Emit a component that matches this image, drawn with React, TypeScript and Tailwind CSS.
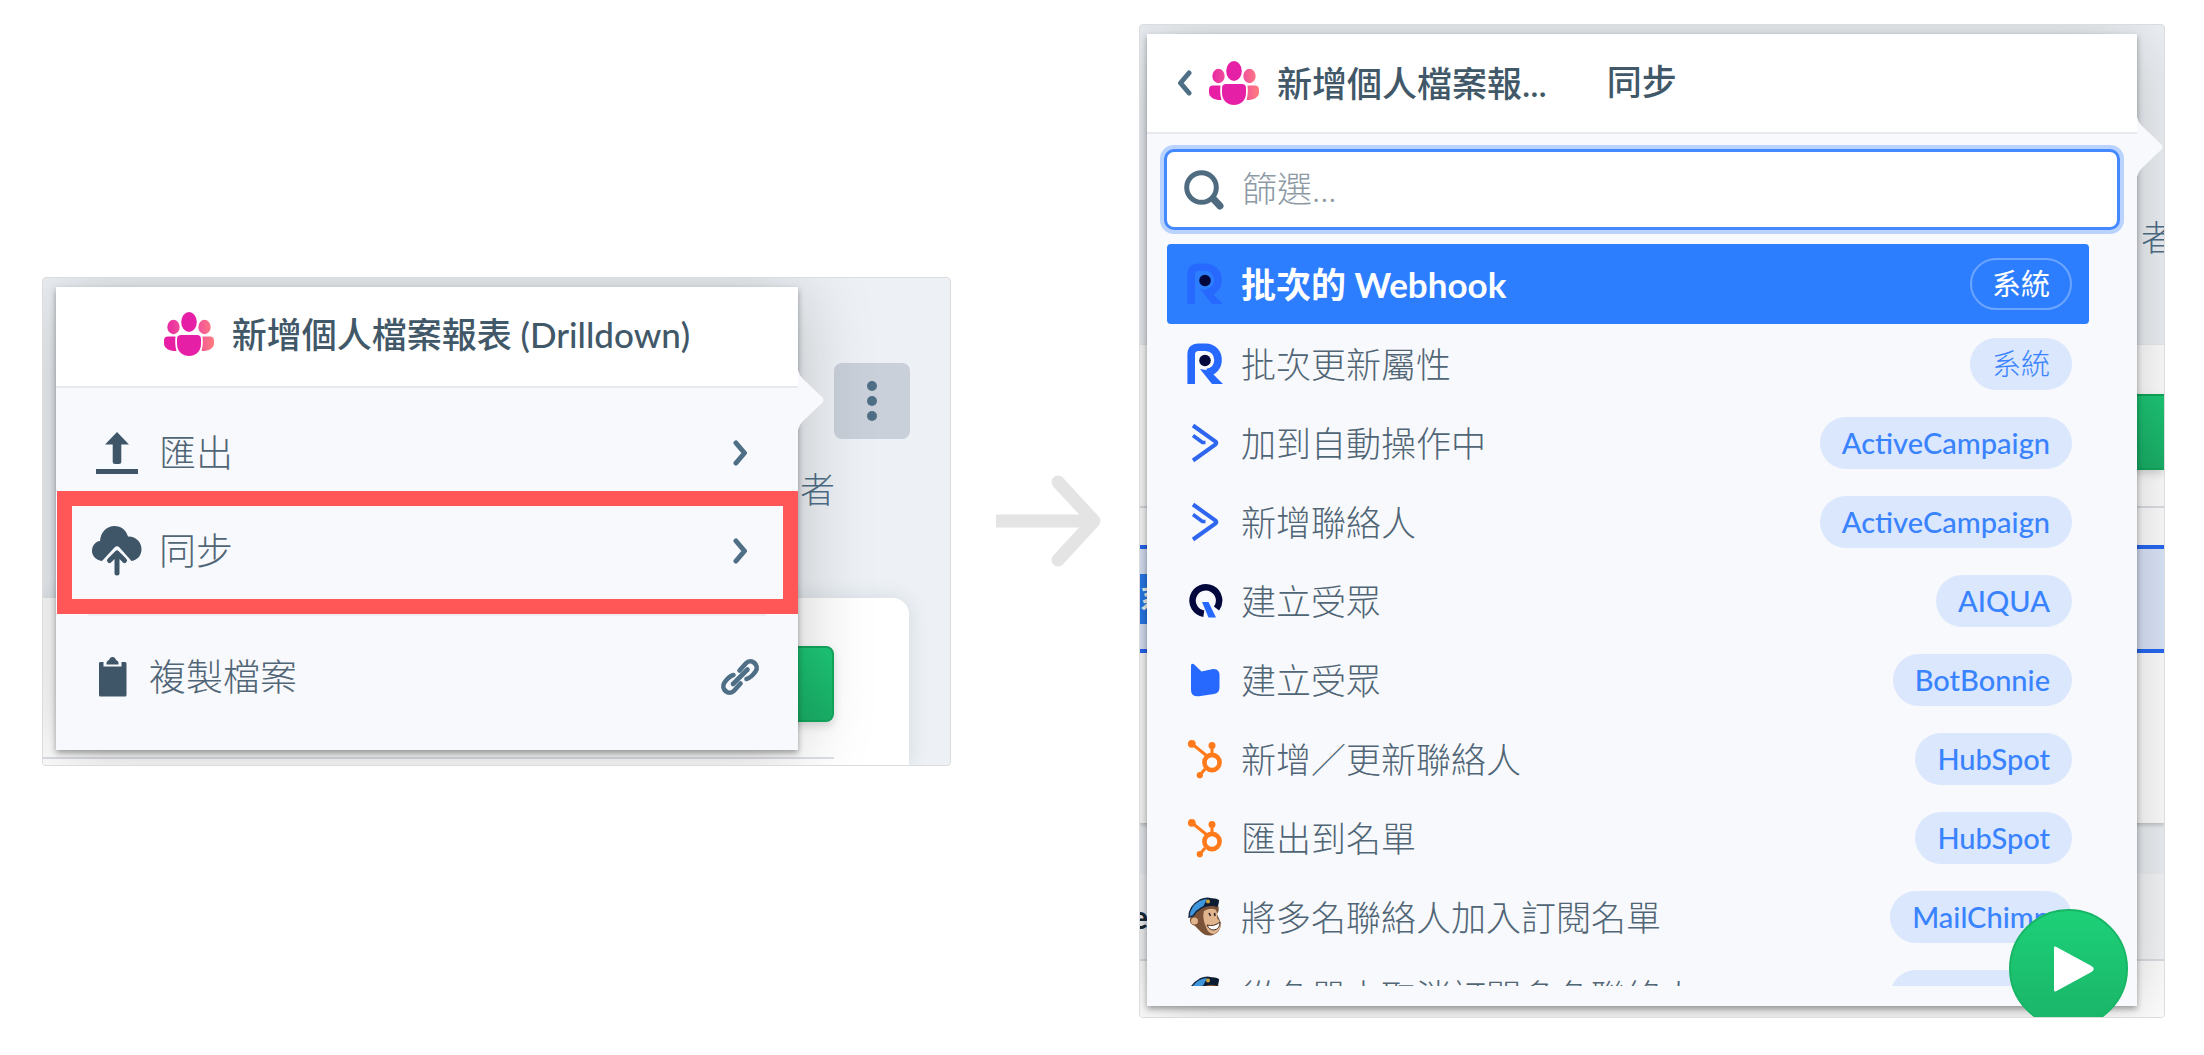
import { ReactNode } from 'react';

type Sync = {
  label: string;
  source: string;
  icon: ReactNode;
};

function PeopleIcon({ id }: { id: string }) {
  return (
    <svg viewBox="0 0 50 44" className="h-[44px] w-[50px] shrink-0" aria-hidden="true">
      <defs>
        <linearGradient id={`${id}-side`} gradientUnits="userSpaceOnUse" x1="0" y1="0" x2="50" y2="0">
          <stop offset="0" stopColor="#e81fa5" />
          <stop offset="0.35" stopColor="#f0509a" />
          <stop offset="0.7" stopColor="#f2559b" />
          <stop offset="1" stopColor="#ff7d7d" />
        </linearGradient>
      </defs>
      <ellipse cx="9.5" cy="15" rx="6.2" ry="7.2" fill={`url(#${id}-side)`} />
      <ellipse cx="40.5" cy="15" rx="6.2" ry="7.2" fill={`url(#${id}-side)`} />
      <ellipse cx="25" cy="10" rx="7.8" ry="10" fill="#e620a6" />
      <path d="M4 24.500H11.500C11 29 11 34 12.500 39C7 39.500 0 37 0 31.500V28.500C0 26 1.500 24.500 4 24.500Z" fill="#e81fa5" />
      <path d="M46 24.500H38.500C39 29 39 34 37.500 39C43 39.500 50 37 50 31.500V28.500C50 26 48.500 24.500 46 24.500Z" fill={`url(#${id}-side)`} />
      <path d="M17 23H33C35.500 23 37 24.500 37 27V32C37 40 31 44 25 44C19 44 13 40 13 32V27C13 24.500 14.500 23 17 23Z" fill="#e620a6" />
    </svg>
  );
}

function Chevron({ left = false }: { left?: boolean }) {
  return (
    <svg viewBox="0 0 15 26" className="h-[26px] w-[15px] shrink-0" fill="none" stroke="#4f6f87" strokeWidth="5" strokeLinecap="round" strokeLinejoin="round" aria-hidden="true">
      <path d={left ? 'M12 3L3.500 13L12 23' : 'M3 3L11.500 13L3 23'} />
    </svg>
  );
}

function UploadIcon() {
  return (
    <svg viewBox="0 0 50 50" className="w-[50px]" fill="#3f5668" aria-hidden="true">
      <path d="M25 4L37 16.500H29.300V33.500Q29.300 36 26.800 36H23.200Q20.700 36 20.700 33.500V16.500H13Z" />
      <rect x="4" y="41" width="42" height="5" />
    </svg>
  );
}

function CloudIcon() {
  return (
    <svg viewBox="0 0 50 50" className="w-[50px]" aria-hidden="true">
      <path d="M10 35C4 34 0 30 0 25C0 19.500 3.500 15.500 8 15C8.500 6.500 14.500 0 22.500 0C29 0 34 4 36 10.500C43.500 10 49.500 16 49.500 23C49.500 29 46 34 39.500 35L27.500 21.500Q25 19 22.500 21.500Z" fill="#3f5668" />
      <path d="M25 47V27M17.500 34.500L25 27L32.500 34.500" fill="none" stroke="#3f5668" strokeWidth="5" strokeLinecap="round" strokeLinejoin="round" />
    </svg>
  );
}

function ClipboardIcon() {
  return (
    <svg viewBox="0 0 40 40" className="w-10" fill="#3f5668" aria-hidden="true">
      <path d="M8 5H11.500V9.500H29.500V5H33Q34.500 5 34.500 6.500V38Q34.500 39.500 33 39.500H8.500Q7 39.500 7 38V6.500Q7 5 8 5Z" />
      <path d="M14.500 7.500Q14 4 17 3Q18 0 20.500 0Q23 0 24 3Q27 4 26.500 7.500Z" />
    </svg>
  );
}

function LinkIcon() {
  return (
    <svg viewBox="0 0 40 40" className="w-10" fill="none" stroke="#4f6f87" strokeWidth="4.600" strokeLinecap="round" aria-hidden="true">
      <path d="M13 27L27.500 12.500" />
      <path d="M19.500 13.500L26 6.200C31 0.800 40 8 35.500 14.500C33 18 30 21 26.500 22" />
      <path d="M20.500 26.500L14 33.800C9 39.200 0 32 4.500 25.500C7 22 10 19 13.500 18" />
    </svg>
  );
}

function SearchIcon() {
  return (
    <svg viewBox="0 0 40 40" className="w-10 shrink-0" fill="none" stroke="#4f6b80" aria-hidden="true">
      <circle cx="17.500" cy="17.500" r="14.800" strokeWidth="5" />
      <path d="M29 28.500L36 36" strokeWidth="7" strokeLinecap="round" />
    </svg>
  );
}

function RIcon() {
  return (
    <svg viewBox="0 0 36 42" className="w-9" aria-hidden="true">
      <path d="M4.200 41V11.500Q4.200 4.200 11.500 4.200H18.500C26 4.200 31 10 31 17C31 23.500 27 28.500 20 29.500" fill="none" stroke="#2769ff" strokeWidth="7.600" />
      <path d="M13 26L22 27.500L26 31L36 41H25Z" fill="#2769ff" />
      <circle cx="18" cy="17.500" r="5.800" fill="#02083c" />
    </svg>
  );
}

function ActiveCampaignIcon() {
  return (
    <svg viewBox="0 0 36 42" className="w-9" fill="none" stroke="#2f66f0" aria-hidden="true">
      <path d="M6 3.500L28.500 19.500Q30 21 28.500 22.500L6 38.500" strokeWidth="4" />
      <path d="M6 13.500L15.500 20.500H18.500" strokeWidth="3.600" strokeLinejoin="round" />
    </svg>
  );
}

function AiquaIcon() {
  return (
    <svg viewBox="0 0 36 42" className="w-9" aria-hidden="true">
      <path d="M16.800 33.700A13.300 13.300 0 1 1 29.500 28.500" fill="none" stroke="#02083c" strokeWidth="6.500" />
      <path d="M15 22H21.500L29 37.500H21.500Z" fill="#2769ff" />
    </svg>
  );
}

function BotBonnieIcon() {
  return (
    <svg viewBox="0 0 36 42" className="w-9" aria-hidden="true">
      <path d="M4 7Q4 3.500 7 5.200L14.500 12.500L26 10Q32.500 9.500 32.500 16.500V28.500Q32.500 34 27 35L12 37.300Q4 38 4 31Z" fill="#2769ff" />
    </svg>
  );
}

function HubSpotIcon() {
  return (
    <svg viewBox="0 0 36 42" className="w-9" fill="none" stroke="#ff7a1a" aria-hidden="true">
      <path d="M4.500 5.500L20 18M25 8V17M18 31L13 37" strokeWidth="3" />
      <circle cx="25" cy="24.500" r="7.600" strokeWidth="4.600" />
      <g fill="#ff7a1a" stroke="none">
        <circle cx="4.800" cy="5.800" r="3.900" />
        <circle cx="25" cy="7.500" r="3.500" />
        <circle cx="12.800" cy="37.200" r="3.100" />
      </g>
    </svg>
  );
}

function MailChimpIcon() {
  return (
    <svg viewBox="0 0 36 42" className="w-9" aria-hidden="true">
      <path d="M5 17L11 10L31 9Q33 14 30 18L34 27Q34 36 26 39Q19 41 14 36L8 30Q2 28 3 23Z" fill="#7a5238" />
      <path d="M17 15Q24 11 29 14Q31 18 30 22L34 27Q34 35 27 38Q21 38 19 31Q15 22 17 15Z" fill="#e0b48c" />
      <circle cx="7.500" cy="25" r="3.500" fill="#e0b48c" />
      <path d="M20 29Q27 31 33 26Q33 33 27 34Q22 34 20 29Z" fill="#fff" stroke="#4a3022" strokeWidth="1" />
      <path d="M22 17L23.500 20M27.500 17L28 20" stroke="#2a2230" strokeWidth="1.600" />
      <path d="M2 21Q2 10 13 4Q20 1 24 3L26 9Q13 9 6 20Z" fill="#3e97dd" stroke="#16263f" strokeWidth="1.400" />
      <path d="M20 3Q28 1 32 4Q32 9 30 11Q24 8 16 11Z" fill="#0e1c33" />
      <circle cx="21" cy="5.500" r="2" fill="#c9a73c" />
    </svg>
  );
}

const syncs: Sync[] = [
  { label: '批次的 Webhook', source: '系統', icon: <RIcon /> },
  { label: '批次更新屬性', source: '系統', icon: <RIcon /> },
  { label: '加到自動操作中', source: 'ActiveCampaign', icon: <ActiveCampaignIcon /> },
  { label: '新增聯絡人', source: 'ActiveCampaign', icon: <ActiveCampaignIcon /> },
  { label: '建立受眾', source: 'AIQUA', icon: <AiquaIcon /> },
  { label: '建立受眾', source: 'BotBonnie', icon: <BotBonnieIcon /> },
  { label: '新增／更新聯絡人', source: 'HubSpot', icon: <HubSpotIcon /> },
  { label: '匯出到名單', source: 'HubSpot', icon: <HubSpotIcon /> },
  { label: '將多名聯絡人加入訂閱名單', source: 'MailChimp', icon: <MailChimpIcon /> },
  { label: '從名單中取消訂閱多名聯絡人', source: 'MailChimp', icon: <MailChimpIcon /> },
];

function PopoverTail() {
  return (
    <svg viewBox="0 0 27 60" className="absolute top-[83px] left-full h-[60px] w-[27px]" aria-hidden="true">
      <path d="M0 0Q1 5 5 9L24 27Q27 30 24 33L5 51Q1 55 0 60Z" fill="#f8f9fc" />
    </svg>
  );
}

function MenuRow({ icon, label, end }: { icon: ReactNode; label: string; end: ReactNode }) {
  return (
    <button type="button" className="flex h-[98px] w-full items-center gap-[17px] pr-[38px] pl-9 text-left text-[37px] leading-[48px] font-light text-[#506575]">
      {icon}
      <span className="grow">{label}</span>
      <span className="flex w-10 justify-center">{end}</span>
    </button>
  );
}

function ActionsCard() {
  return (
    <section className="relative overflow-hidden rounded border border-[#dcdcdc] bg-[#edf1f5]">
      {/* page under the popover */}
      <div className="absolute inset-0 flex flex-col">
        <div className="flex h-[320px] flex-col items-end pt-[85px] pr-10">
          <button type="button" aria-label="更多" className="flex h-[76px] w-[76px] flex-col items-center justify-center gap-[5px] rounded-lg bg-[#c9d0d9]">
            <span className="h-[10px] w-[10px] rounded-full bg-[#4f6f87]" />
            <span className="h-[10px] w-[10px] rounded-full bg-[#4f6f87]" />
            <span className="h-[10px] w-[10px] rounded-full bg-[#4f6f87]" />
          </button>
          <span className="mt-7 mr-[75px] text-[35px] leading-[44px] font-light text-[#4f6f87]">者</span>
        </div>
        <div className="mr-[41px] flex grow flex-col rounded-tr-2xl bg-white pr-[75px] shadow-[0_0_20px_rgba(60,80,100,0.14)]">
          <div className="mt-12 h-[76px] w-40 self-end rounded-lg border-2 border-[#12a85c] bg-linear-to-b from-[#1dc876] to-[#1ab068] shadow-[0_4px_8px_rgba(0,0,0,0.15)]" />
          <div className="mt-[35px] h-[2px] bg-[#dcdfe5]" />
        </div>
      </div>

      <div className="relative mt-[9px] mr-[152px] mb-[15px] ml-[13px] bg-[#f8f9fc] shadow-[0_3px_6px_rgba(0,0,0,0.35),0_4px_70px_rgba(0,0,0,0.22)]">
        <PopoverTail />
        <header className="flex h-[101px] items-center justify-center gap-[18px] border-b-2 border-[#e7e9ee] bg-white pb-1">
          <PeopleIcon id="actions" />
          <h2 className="text-[35px] leading-[44px] font-medium whitespace-nowrap">新增個人檔案報表 (Drilldown)</h2>
        </header>
        <div className="flex flex-col pt-4 pb-6">
          <MenuRow icon={<UploadIcon />} label="匯出" end={<Chevron />} />
          <div className="relative z-10">
            <MenuRow icon={<CloudIcon />} label="同步" end={<Chevron />} />
            <div className="pointer-events-none absolute -top-[11px] right-0 -bottom-[14px] left-px border-[15px] border-[#ff5757]" />
          </div>
          <hr className="mx-8 mt-[14px] mb-3 border-t-2 border-[#eceef2]" />
          <MenuRow icon={<ClipboardIcon />} label="複製檔案" end={<LinkIcon />} />
        </div>
      </div>
    </section>
  );
}

function SyncCard() {
  return (
    <section className="relative overflow-hidden rounded border border-[#dcdcdc] bg-[#edf1f5]">
      {/* page under the popover */}
      <div className="absolute inset-0 flex flex-col">
        <div className="flex h-[320px] items-start justify-end pt-[190px]">
          <span className="-mr-[12px] text-[35px] leading-[44px] font-light text-[#4f6f87]">者</span>
        </div>
        <div className="flex h-[478px] flex-col bg-white shadow-[0_2px_4px_rgba(0,0,0,0.2)]">
          <div className="mt-[49px] h-[76px] w-40 self-end border-y-2 border-[#12a85c] bg-linear-to-b from-[#1dc876] to-[#1ab068] shadow-[0_4px_8px_rgba(0,0,0,0.15)]" />
          <div className="mt-[36px] h-[2px] bg-[#dcdfe5]" />
          <div className="mt-[37px] flex h-[108px] items-center border-y-4 border-[#2769f5] bg-[#dde7fb]">
            <div className="h-[50px] w-40 bg-[#2b7cf0] text-[28px] leading-[48px] font-bold text-white">系統</div>
          </div>
        </div>
        <div className="mt-[51px] flex h-[87px] items-center border-b-2 border-[#dcdfe5] bg-[#f6f7f9]">
          <span className="-ml-[9px] text-[32px] leading-10 font-bold text-[#17293a]">e</span>
        </div>
        <div className="grow bg-white" />
      </div>

      <div className="relative mt-[9px] mr-[27px] mb-[11px] ml-[7px] bg-[#f8f9fc] pb-5 shadow-[0_3px_6px_rgba(0,0,0,0.35),0_4px_70px_rgba(0,0,0,0.22)]">
        <PopoverTail />
        <header className="flex h-[100px] items-center border-b-2 border-[#e7e9ee] bg-white pl-[30px] text-[35px] leading-[44px] font-medium">
          <button type="button" aria-label="返回" className="flex items-center">
            <Chevron left />
          </button>
          <div className="ml-[17px] flex items-center gap-[18px]">
            <PeopleIcon id="sync" />
            <h2 className="whitespace-nowrap">新增個人檔案報...</h2>
          </div>
          <h3 className="ml-[60px] pb-1">同步</h3>
        </header>

        <label className="mx-[17px] mt-[15px] flex h-[81px] items-center gap-[18px] rounded-[10px] border-[3px] border-[#4489ff] bg-white pl-[17px] shadow-[0_0_0_4px_#bad3fe]">
          <SearchIcon />
          <input type="text" aria-label="篩選" placeholder="篩選..." className="w-full bg-transparent pb-1 text-[35px] leading-[44px] font-light outline-none placeholder:text-[#8d9aa5]" />
        </label>

        <ul className="mt-[14px] mr-12 ml-5 h-[742px] overflow-hidden">
          {syncs.map((sync, i) => (
            <li key={i}>
              <button
                type="button"
                className={
                  i === 0
                    ? 'flex h-[80px] w-full items-center gap-[18px] rounded bg-[#2c7eff] pr-[17px] pl-5 text-left text-[35px] leading-[44px] font-bold text-white'
                    : 'flex h-[79px] w-full items-center gap-[18px] pr-[17px] pl-5 text-left text-[35px] leading-[44px] font-light text-[#506575]'
                }
              >
                {sync.icon}
                <span className="grow">{sync.label}</span>
                {i === 0 ? (
                  <span className="rounded-full border-2 border-[#6ba5ff] px-5 text-[29px] leading-[48px] font-normal">{sync.source}</span>
                ) : (
                  <span
                    className={
                      sync.source === '系統'
                        ? 'rounded-full bg-[#dbe7fd] px-[22px] text-[29px] leading-[52px] font-light text-[#3a83ff]'
                        : 'rounded-full bg-[#dbe7fd] px-[22px] text-[29px] leading-[52px] font-medium text-[#3a83ff]'
                    }
                  >
                    {sync.source}
                  </span>
                )}
              </button>
            </li>
          ))}
        </ul>
      </div>

      <button type="button" aria-label="執行" className="absolute right-9 -bottom-[11px] flex h-[119px] w-[119px] items-center justify-center rounded-full border-2 border-[#17b566] bg-linear-to-b from-[#1dd078] to-[#1ab468]">
        <svg viewBox="0 0 40 46" className="ml-[10px] h-[46px] w-10" fill="#fff" aria-hidden="true">
          <path d="M0 2Q0 0 2 0.800L37.500 20Q42 23 37.500 26L2 45.200Q0 46 0 44Z" />
        </svg>
      </button>
    </section>
  );
}

export default function App() {
  return (
    <main className="grid min-h-screen grid-cols-[909fr_188px_1026fr] content-start items-center bg-white pt-6 pr-[39px] pl-[42px] font-['Lato','Noto_Sans_CJK_TC',sans-serif] text-[#415868]">
      <ActionsCard />
      <svg viewBox="0 0 106 92" className="ml-[45px] w-[106px]" fill="none" stroke="#e4e4e4" strokeWidth="13" strokeLinejoin="round" aria-hidden="true">
        <path d="M0 46H97" />
        <path d="M62 7L98 46L62 85" strokeLinecap="round" />
      </svg>
      <SyncCard />
    </main>
  );
}
